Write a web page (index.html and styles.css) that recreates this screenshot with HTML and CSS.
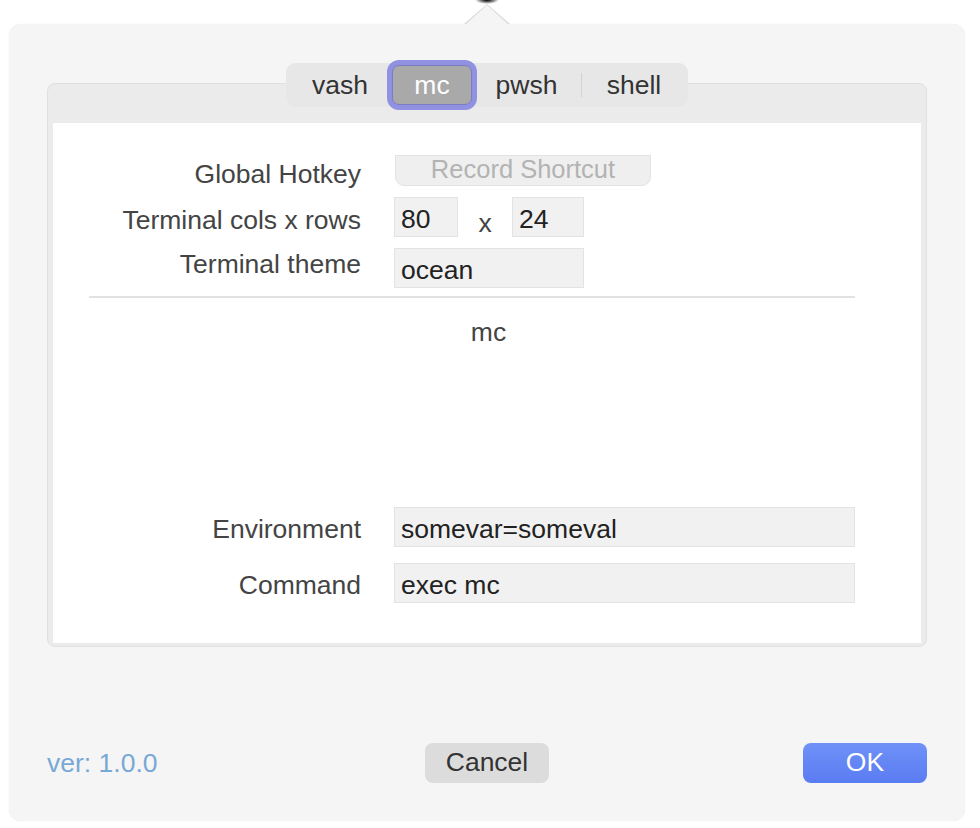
FILE: index.html
```html
<!DOCTYPE html>
<html>
<head>
<meta charset="utf-8">
<link rel="stylesheet" href="styles.css">
</head>
<body>
<div class="dialog">
  <span class="tip"></span>
  <div class="tabview">
    <div class="segmented">
      <div class="seg seg-vash">vash</div>
      <div class="seg seg-active">mc</div>
      <div class="seg seg-pwsh">pwsh</div>
      <div class="seg-sep"></div>
      <div class="seg seg-shell">shell</div>
    </div>
    <div class="tabbox">
      <div class="tabpane">
        <div class="form form-top">
          <div class="row row-hotkey">
            <div class="label">Global Hotkey</div>
            <div class="shortcut">Record Shortcut</div>
          </div>
          <div class="row row-size">
            <div class="label">Terminal cols x rows</div>
            <div class="pair">
              <div class="field field-cols">80</div>
              <div class="times">x</div>
              <div class="field field-rows">24</div>
            </div>
          </div>
          <div class="row row-theme">
            <div class="label">Terminal theme</div>
            <div class="field field-theme">ocean</div>
          </div>
        </div>
        <div class="divider"></div>
        <div class="pane-title">mc</div>
        <div class="form form-bottom">
          <div class="row row-env">
            <div class="label">Environment</div>
            <div class="field">somevar=someval</div>
          </div>
          <div class="row row-cmd">
            <div class="label">Command</div>
            <div class="field">exec mc</div>
          </div>
        </div>
      </div>
    </div>
  </div>
  <div class="footer">
    <div class="version">ver: 1.0.0</div>
    <div class="btn btn-cancel">Cancel</div>
    <div class="btn btn-ok">OK</div>
  </div>
</div>
</body>
</html>
```
FILE: styles.css
```css
* { box-sizing: border-box; }
html, body { margin: 0; padding: 0; background: #ffffff; }
body {
  font-family: "Liberation Sans", Arial, sans-serif;
  font-size: 26.5px;
  color: #444444;
  width: 980px;
  height: 828px;
  overflow: hidden;
}
.dialog {
  position: relative;
  margin: 24px 0 0 9px;
  width: 956px;
  height: 797px;
  background: #f5f5f5;
  border-radius: 12px;
  padding: 39px 38px 0 38px;
  box-shadow: 0 0 1px rgba(0,0,0,0.12);
}
.dialog::before {
  content: "";
  position: absolute;
  top: -20px;
  left: 455px;
  width: 46px;
  height: 20px;
  background: #d9d9d9;
  clip-path: polygon(50% 0, 100% 100%, 0 100%);
}
.dialog::after {
  content: "";
  position: absolute;
  top: -19px;
  left: 456px;
  width: 44px;
  height: 20px;
  background: #f5f5f5;
  clip-path: polygon(50% 0, 100% 100%, 0 100%);
}
.tip {
  position: absolute;
  top: -24px;
  left: 466px;
  width: 24px;
  height: 4px;
  background: radial-gradient(ellipse at 50% 0%, #000 0, rgba(0,0,0,0.7) 25%, rgba(0,0,0,0) 70%);
  z-index: 2;
}
.tabview {
  display: flex;
  flex-direction: column;
  align-items: center;
}
.segmented {
  position: relative;
  z-index: 1;
  display: flex;
  align-items: center;
  width: 402px;
  height: 44px;
  padding: 0 2px;
  background: #e7e7e7;
  border-radius: 9px;
  color: #333333;
}
.seg {
  text-align: center;
  line-height: 40px;
  height: 40px;
}
.seg-vash { width: 104px; }
.seg-pwsh { width: 109px; }
.seg-shell { width: 104px; }
.seg-active {
  width: 80px;
  background: #a9a9a9;
  color: #ffffff;
  border: 1px solid #7c7cc4;
  border-radius: 7px;
  line-height: 38px;
  box-shadow: 0 0 0 5px #9191e1;
}
.seg-sep {
  width: 1px;
  height: 24px;
  background: #d2d2d2;
}
.tabbox {
  margin-top: -24px;
  width: 880px;
  height: 564px;
  background: #ebebeb;
  border: 1px solid #e0e0e0;
  border-radius: 8px;
  padding: 39px 5px 3px 5px;
}
.tabpane {
  background: #ffffff;
  height: 100%;
  padding-top: 32px;
}
.form {
  width: 766px;
  margin-left: 36px;
  display: flex;
  flex-direction: column;
}
.row {
  display: grid;
  grid-template-columns: 272px 1fr;
  column-gap: 33px;
  align-items: center;
}
.label {
  text-align: right;
  color: #444444;
  line-height: 30px;
}
.row-hotkey {
  grid-template-rows: 31px;
  height: 31px;
  align-items: start;
  margin-bottom: 11px;
}
.row-hotkey .label { margin-top: 4px; }
.row-size { margin-bottom: 10px; }
.row-size .label { padding-top: 4px; }
.row-theme .label { padding-bottom: 8px; }
.row-env .label, .row-cmd .label { padding-top: 4px; }
.shortcut {
  width: 256px;
  height: 31px;
  margin-left: 1px;
  background: #efefef;
  border: 1px solid #e3e3e3;
  border-radius: 0 0 9px 9px;
  color: #b3b3b3;
  font-size: 25.5px;
  text-align: center;
  line-height: 26px;
}
.field {
  height: 40px;
  background: #f1f1f1;
  border: 1px solid #e3e3e3;
  color: #222222;
  padding: 3px 0 0 6px;
  line-height: 36px;
}
.pair { display: flex; align-items: flex-start; }
.field-cols { width: 64px; }
.field-rows { width: 72px; }
.field-theme { width: 190px; }
.times {
  width: 54px;
  text-align: center;
  padding-top: 11px;
  line-height: 30px;
  color: #444444;
}
.divider {
  width: 766px;
  margin: 8px 0 0 36px;
  height: 2px;
  background: #e1e1e1;
}
.pane-title {
  margin-top: 19px;
  padding-left: 3px;
  text-align: center;
  line-height: 30px;
  color: #444444;
}
.form-bottom { margin-top: 160px; }
.row-env { margin-bottom: 16px; }
.footer {
  margin-top: 96px;
  display: grid;
  grid-template-columns: 1fr auto 1fr;
  align-items: center;
}
.version {
  color: #78a8d6;
  line-height: 38px;
}
.btn {
  width: 124px;
  height: 40px;
  border-radius: 8px;
  text-align: center;
  line-height: 38px;
}
.btn-cancel {
  background: #dcdcdc;
  color: #333333;
}
.btn-ok {
  justify-self: end;
  background: linear-gradient(#6f91f7, #5a7cf2);
  color: #ffffff;
}
```
